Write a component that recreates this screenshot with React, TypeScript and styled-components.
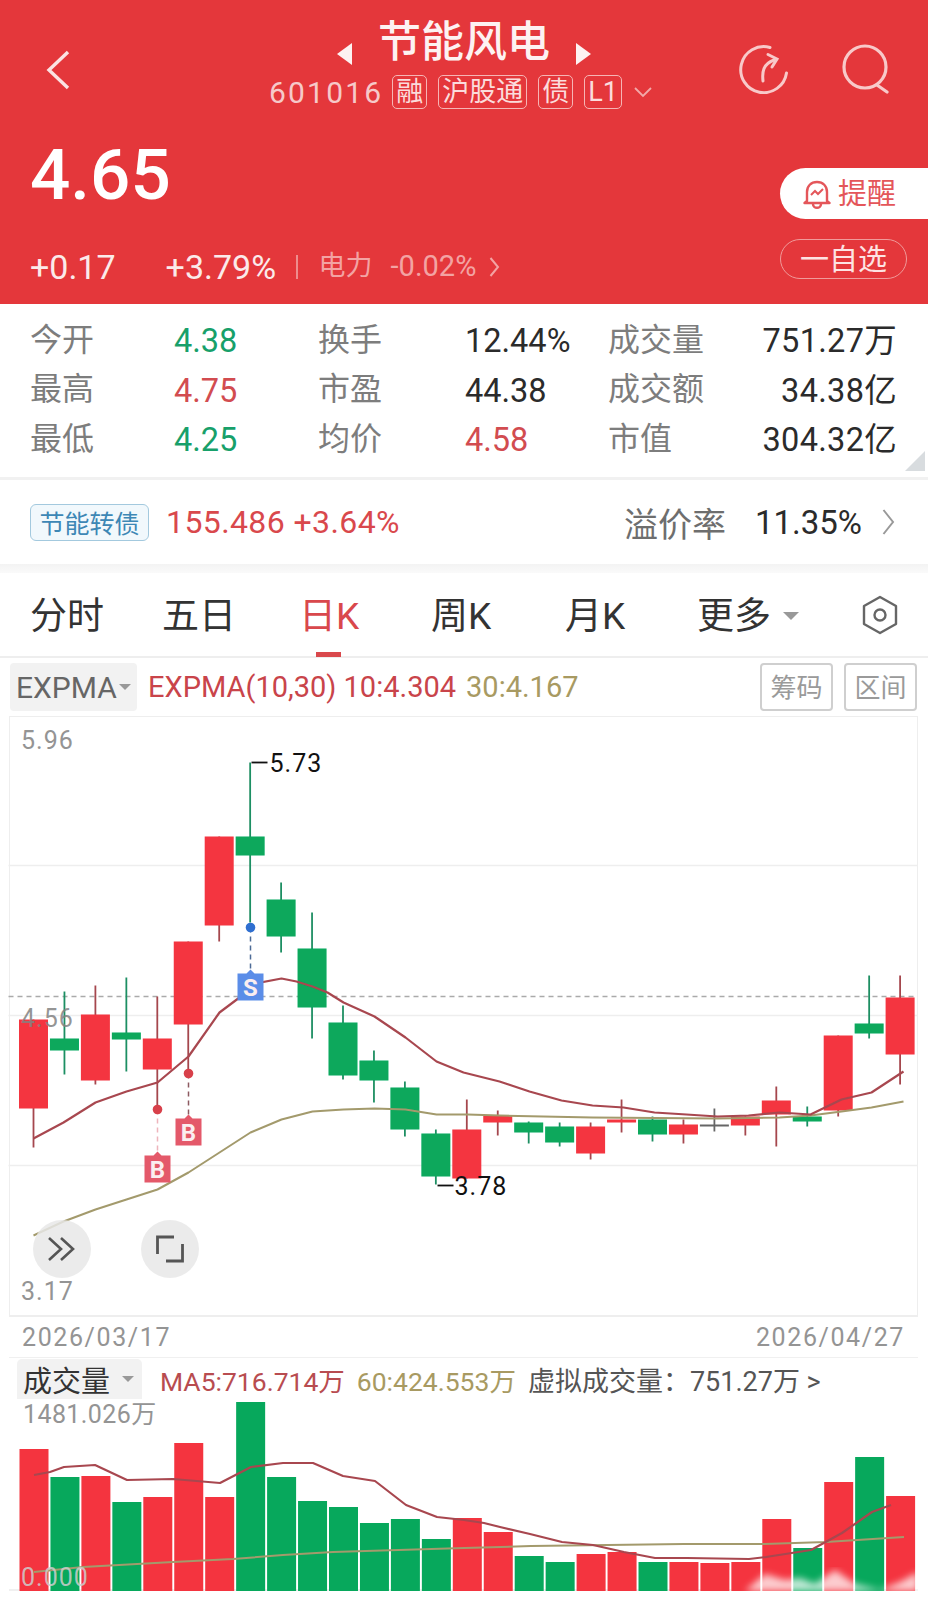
import React from "react";
import styled, { createGlobalStyle } from "styled-components";

const RED = "#f4343f";
const GREEN = "#07a85c";
const FONT = `Roboto, "Noto Sans CJK SC", sans-serif`;

type Candle = [top: number, bottom: number, high: number, low: number, color: "r" | "g" | "d"];

// page coordinates, read off the screenshot
const CANDLES: Candle[] = [
  [1020, 1109, 1020, 1148, "r"],
  [1039, 1051, 992, 1075, "g"],
  [1015, 1081, 986, 1085, "r"],
  [1033, 1040, 978, 1072, "g"],
  [1039, 1070, 997, 1110, "r"],
  [942, 1025, 942, 1073, "r"],
  [837, 926, 837, 942, "r"],
  [837, 856, 763, 923, "g"],
  [900, 937, 883, 953, "g"],
  [949, 1008, 913, 1039, "g"],
  [1023, 1076, 1006, 1080, "g"],
  [1061, 1081, 1051, 1103, "g"],
  [1088, 1130, 1082, 1137, "g"],
  [1134, 1177, 1130, 1185, "g"],
  [1130, 1179, 1100, 1179, "r"],
  [1116, 1123, 1111, 1136, "r"],
  [1123, 1133, 1122, 1144, "g"],
  [1127, 1143, 1123, 1147, "g"],
  [1127, 1154, 1123, 1160, "r"],
  [1120, 1123, 1100, 1133, "r"],
  [1120, 1135, 1117, 1142, "g"],
  [1125, 1135, 1120, 1144, "r"],
  [1125, 1127, 1109, 1132, "d"],
  [1117, 1126, 1117, 1136, "r"],
  [1101, 1115, 1087, 1147, "r"],
  [1117, 1122, 1107, 1127, "g"],
  [1036, 1111, 1036, 1117, "r"],
  [1024, 1034, 976, 1039, "g"],
  [998, 1055, 976, 1085, "r"],
];

const VOLUMES = [
  1449, 1477, 1476, 1502, 1497, 1443, 1497, 1402, 1477, 1501, 1507, 1523, 1519, 1539, 1518, 1532, 1556, 1562, 1554,
  1552, 1562, 1562, 1563, 1562, 1519, 1548, 1482, 1457, 1496,
];

const EXPMA10 =
  "34,1139 64,1123 96,1103 127,1092 158,1083 189,1057 220,1013 240,998 251,985 282,979 297,982 313,987 328,993 344,1003 375,1017 406,1038 437,1062 464,1073 500,1082 530,1092 562,1101 593,1106 624,1108 655,1113 687,1115 718,1117 749,1116 780,1113 811,1115 842,1100 872,1093 904,1072";
const EXPMA30 =
  "34,1236 64,1222 96,1210 127,1200 158,1190 189,1173 220,1153 251,1133 282,1120 313,1112 344,1110 375,1109 406,1110 437,1115 468,1115 500,1116 593,1118 718,1119 780,1118 811,1116 842,1112 872,1108 904,1102";
const MA5 =
  "34,1475 50,1472 64,1467 95,1465 127,1480 173,1479 220,1483 251,1467 283,1463 313,1463 343,1476 375,1481 406,1505 437,1517 464,1520 484,1523 500,1527 530,1534 562,1542 593,1545 624,1552 655,1558 687,1558 749,1559 766,1557 811,1550 842,1533 872,1512 891,1505";
const MA60 =
  "34,1572 83,1567 173,1562 233,1559 283,1555 333,1552 464,1548 531,1546 684,1544 764,1544 826,1542 904,1537";

const candleX = (i: number) => 34 + 30.95 * i;
const fill = (c: Candle[4]) => (c === "r" ? RED : c === "g" ? GREEN : "#666");
const wick = (c: Candle[4]) => (c === "r" ? "#a5474e" : c === "g" ? "#1f8f63" : "#666");

const GlobalStyle = createGlobalStyle`
  html, body {
    margin: 0;
    padding: 0;
    background: #fff;
  }
  body {
    font-family: ${FONT};
  }
  * {
    box-sizing: border-box;
  }
`;

const Page = styled.div`
  width: 928px;
  height: 1600px;
  overflow: hidden;
  background: #fff;
  display: flex;
  flex-direction: column;
`;

const Header = styled.header`
  height: 304px;
  flex: none;
  background: #e4373b;
  color: #fff;
  padding-top: 14px;
`;

const NavRow = styled.div`
  display: grid;
  grid-template-columns: 1fr auto 1fr;
  align-items: start;
`;

const BackSlot = styled.div`
  padding: 36px 0 0 46px;
`;

const ActionSlot = styled.div`
  display: flex;
  justify-content: flex-end;
  gap: 52px;
  padding: 30px 39px 0 0;
`;

const NavCenter = styled.div`
  display: flex;
  flex-direction: column;
  align-items: center;
`;

const TitleRow = styled.div`
  display: flex;
  align-items: center;
  height: 56px;
`;

const TriangleSlot = styled.span`
  display: flex;
  margin-top: 24px;
`;

const Title = styled.h1`
  margin: 0;
  font-size: 43px;
  font-weight: 500;
  line-height: 56px;
  padding: 0 26px;
  color: #fdf2f2;
`;

const Subtitle = styled.div`
  display: flex;
  align-items: center;
  height: 36px;
  margin-top: 4px;
  padding-right: 6px;
  color: #f6c9c9;
`;

const Code = styled.span`
  font-size: 30px;
  letter-spacing: 2.2px;
  margin-right: 9px;
`;

const Tag = styled.span`
  display: inline-flex;
  align-items: center;
  justify-content: center;
  height: 34px;
  padding: 0 3px;
  margin-right: 11px;
  font-size: 27px;
  line-height: 1;
  border: 1.5px solid #f6b5b5;
  border-radius: 5px;
  color: #fbdcdc;
`;

const PriceRow = styled.div`
  display: flex;
  justify-content: space-between;
  margin-top: 58px;
  padding-left: 30px;
`;

const PriceColumn = styled.div`
  display: flex;
  flex-direction: column;
`;

const Price = styled.div`
  font-size: 71px;
  line-height: 52px;
  font-weight: 500;
  color: #fff;
  margin-top: -19px;
`;

const ChangeRow = styled.div`
  display: flex;
  align-items: center;
  margin-top: 49px;
  height: 34px;
`;

const Change = styled.span<{ $gap: number }>`
  font-size: 34px;
  color: #fbeaea;
  margin-right: ${(p) => p.$gap}px;
`;

const Divider = styled.i`
  width: 1.5px;
  height: 24px;
  background: #ee8d8d;
  margin-right: 21px;
`;

const Sector = styled.span<{ $size: number; $gap: number }>`
  font-size: ${(p) => p.$size}px;
  line-height: 30px;
  margin-top: -2px;
  color: #f3a3a3;
  margin-right: ${(p) => p.$gap}px;
`;

const ButtonColumn = styled.div`
  display: flex;
  flex-direction: column;
  align-items: flex-start;
  width: 148px;
  gap: 20px;
`;

const AlarmButton = styled.div`
  display: flex;
  align-items: center;
  gap: 7px;
  width: 148px;
  height: 51px;
  padding-left: 23px;
  background: #fff;
  border-radius: 26px 0 0 26px;
  color: #e4565a;
  font-size: 29px;
`;

const AlarmText = styled.span`
  margin-top: -6px;
`;

const WatchButton = styled.div`
  display: flex;
  align-items: center;
  justify-content: center;
  width: 127px;
  height: 40px;
  padding-bottom: 4px;
  border: 1.5px solid #f09a9a;
  border-radius: 20px;
  color: #fde3e3;
  font-size: 29px;
`;

const Stats = styled.section`
  position: relative;
  flex: none;
  height: 176px;
  padding-top: 12px;
  display: grid;
  grid-template-columns: 144px 144px 147px 143px 150px 1fr;
  grid-auto-rows: 49.5px;
  padding-left: 30px;
  padding-right: 31px;
  align-items: center;
  border-bottom: 3px solid #f1f1f1;
`;

const StatLabel = styled.span`
  font-size: 32px;
  line-height: 44px;
  margin-top: -2px;
  color: #7d7d7d;
  white-space: nowrap;
`;

const StatValue = styled.span<{ $color?: string; $right?: boolean }>`
  font-size: 32.5px;
  line-height: 44px;
  margin-top: 1px;
  color: ${(p) => p.$color || "#2b2b2b"};
  text-align: ${(p) => (p.$right ? "right" : "left")};
  letter-spacing: ${(p) => (p.$right ? 0.3 : 0)}px;
  white-space: nowrap;
`;

const CornerFold = styled.i`
  position: absolute;
  right: 3px;
  bottom: 6px;
  width: 0;
  height: 0;
  border-left: 20px solid transparent;
  border-bottom: 20px solid #d8dcdf;
`;

const BondRow = styled.section`
  flex: none;
  height: 84px;
  display: flex;
  align-items: center;
  padding: 0 33px 0 30px;
`;

const BondTag = styled.span`
  width: 119px;
  height: 37px;
  display: flex;
  align-items: center;
  justify-content: center;
  font-size: 25px;
  color: #3d87b5;
  background: #f1f8fc;
  border: 1.5px solid #a3c9de;
  border-radius: 6px;
  margin-right: 17px;
`;

const BondPrice = styled.span`
  font-size: 32px;
  color: #d9484c;
  letter-spacing: 0.4px;
  flex: 1;
`;

const PremiumLabel = styled.span`
  font-size: 34px;
  color: #6e6e6e;
  margin-right: 29px;
`;

const PremiumValue = styled.span`
  font-size: 33px;
  color: #2b2b2b;
  margin-right: 20px;
`;

const GapBar = styled.div`
  flex: none;
  height: 9px;
  background: linear-gradient(#f3f3f3, #fafafa);
`;

const TabBar = styled.nav`
  flex: none;
  height: 85px;
  display: flex;
  align-items: center;
  padding: 0 30px;
  border-bottom: 2px solid #eee;
`;

const Tab = styled.span<{ $active?: boolean; $width: number }>`
  position: relative;
  display: flex;
  height: 85px;
  padding-bottom: 3px;
  align-items: center;
  width: ${(p) => p.$width}px;
  font-size: 37px;
  color: ${(p) => (p.$active ? "#d9484c" : "#333")};

  ${(p) =>
    p.$active &&
    `
    &::after {
      content: "";
      position: absolute;
      left: 17px;
      bottom: 0;
      width: 25px;
      height: 5px;
      background: #d9484c;
    }
  `}
`;

const Caret = styled.i<{ $size: number; $color: string; $gap?: number }>`
  display: inline-block;
  width: 0;
  height: 0;
  margin-left: ${(p) => p.$gap || 0}px;
  margin-top: ${(p) => (p.$gap ? 5 : 0)}px;
  border-left: ${(p) => p.$size}px solid transparent;
  border-right: ${(p) => p.$size}px solid transparent;
  border-top: ${(p) => p.$size}px solid ${(p) => p.$color};
`;

const IndicatorRow = styled.div`
  flex: none;
  height: 58px;
  display: flex;
  align-items: center;
  padding: 0 11px 0 10px;
`;

const IndicatorChip = styled.div`
  width: 127px;
  height: 48px;
  display: flex;
  align-items: center;
  gap: 2px;
  padding-left: 6px;
  background: #f2f2f2;
  border-radius: 4px;
  font-size: 30px;
  color: #666;
  margin-right: 11px;
`;

const SeriesText = styled.span<{ $color: string; $size: number; $gap?: number }>`
  font-size: ${(p) => p.$size}px;
  color: ${(p) => p.$color};
  margin-right: ${(p) => p.$gap || 0}px;
  white-space: nowrap;
`;

const Spacer = styled.div`
  flex: 1;
`;

const OutlineButton = styled.span`
  width: 73px;
  height: 48px;
  display: flex;
  align-items: center;
  justify-content: center;
  margin-left: 11px;
  padding-bottom: 3px;
  font-size: 26px;
  color: #9a9a9a;
  border: 2px solid #cfcfcf;
  border-radius: 4px;
`;

const ChartPanel = styled.section`
  position: relative;
  flex: none;
  height: 601px;
  margin: 0 10px 0 9px;
  border: 1.5px solid #eee;
  border-bottom-width: 2px;

  svg {
    display: block;
    overflow: visible;
  }
`;

const AxisLabel = styled.span<{ $top: number; $left?: number; $color?: string; $spacing?: number }>`
  position: absolute;
  top: ${(p) => p.$top}px;
  left: ${(p) => p.$left ?? 11}px;
  font-size: 25px;
  line-height: 30px;
  letter-spacing: ${(p) => p.$spacing ?? 1}px;
  color: ${(p) => p.$color || "#949494"};
  white-space: nowrap;
`;

const RoundButton = styled.div<{ $left: number }>`
  position: absolute;
  left: ${(p) => p.$left}px;
  top: 503px;
  width: 58px;
  height: 58px;
  display: flex;
  align-items: center;
  justify-content: center;
  border-radius: 50%;
  background: rgba(232, 232, 232, 0.85);
`;

const DateRow = styled.div`
  flex: none;
  height: 41px;
  margin: 0 10px 0 9px;
  padding: 0 13px 0 13px;
  display: flex;
  align-items: center;
  justify-content: space-between;
  font-size: 25px;
  letter-spacing: 1.6px;
  color: #949494;
  border-bottom: 1.5px solid #f0f0f0;
`;

const VolumeHeader = styled.div`
  flex: none;
  height: 42px;
  display: flex;
  align-items: center;
  padding-left: 17px;
`;

const VolumeChip = styled.div`
  width: 125px;
  height: 40px;
  display: flex;
  align-items: center;
  gap: 12px;
  padding-left: 6px;
  background: #f2f2f2;
  border-radius: 5px 5px 0 0;
  font-size: 29px;
  color: #333;
  margin-right: 18px;
`;

const VolumePanel = styled.section`
  position: relative;
  flex: none;
  height: 191px;
  margin: 0 10px 0 9px;
  border-bottom: 2px solid #f0f0f0;

  svg {
    display: block;
    overflow: visible;
  }
`;

const BackIcon = () => (
  <svg width="24" height="40" viewBox="0 0 24 40" fill="none" stroke="#fbe3e3" strokeWidth="3.4">
    <path d="M22 2 L3 20 L22 38" />
  </svg>
);

const RefreshIcon = () => (
  <svg width="50" height="50" viewBox="0 0 50 50" fill="none" stroke="#f8c9c9" strokeWidth="3">
    <path d="M31 3.5 A23 23 0 1 0 47.5 29" strokeLinecap="round" />
    <path d="M24 37 C23 28 24 20 35 16" strokeLinecap="round" />
    <path d="M29 10.5 L38 15 L33 23" strokeLinecap="round" />
  </svg>
);

const SearchIcon = () => (
  <svg width="48" height="50" viewBox="0 0 48 50" fill="none" stroke="#f8c9c9" strokeWidth="3.2">
    <circle cx="24" cy="23" r="21" />
    <path d="M36 41 L46 48" strokeLinecap="round" />
  </svg>
);

const Triangle = ({ dir }: { dir: "l" | "r" }) => (
  <TriangleSlot>
    <svg width="15" height="22" viewBox="0 0 15 22" fill="#fdf2f2">
      <path d={dir === "l" ? "M15 0 V22 L0 11 Z" : "M0 0 V22 L15 11 Z"} />
    </svg>
  </TriangleSlot>
);

const SmallChevronDown = () => (
  <svg width="20" height="12" viewBox="0 0 20 12" fill="none" stroke="#f2a9a9" strokeWidth="1.8">
    <path d="M2 2 L10 10 L18 2" />
  </svg>
);

const ChevronRight = ({ color, w, h }: { color: string; w: number; h: number }) => (
  <svg width={w} height={h} viewBox={`0 0 ${w} ${h}`} fill="none" stroke={color} strokeWidth="2">
    <path d={`M1.5 1 L${w - 2} ${h / 2} L1.5 ${h - 1}`} />
  </svg>
);

const BellIcon = () => (
  <svg width="28" height="30" viewBox="0 0 28 30" fill="none" stroke="#e4565a" strokeWidth="2.4">
    <path d="M4 22 V13 C4 7 8 3 14 3 C20 3 24 7 24 13 V22 L26.5 24 H1.5 Z" strokeLinejoin="round" />
    <path d="M10 25 C10 30 18 30 18 25" />
    <path d="M8 16 L12 12 L15 15 L20 10" strokeWidth="2" />
  </svg>
);

const HexIcon = () => (
  <svg width="36" height="40" viewBox="0 0 36 40" fill="none" stroke="#666" strokeWidth="2.4">
    <path d="M18 2 L34 11 V29 L18 38 L2 29 V11 Z" strokeLinejoin="round" />
    <circle cx="18" cy="20" r="5.5" />
  </svg>
);

const DoubleChevron = () => (
  <svg width="30" height="26" viewBox="0 0 30 26" fill="none" stroke="#555" strokeWidth="2.6">
    <path d="M2 2 L14 13 L2 24" />
    <path d="M14 2 L26 13 L14 24" />
  </svg>
);

const FullscreenIcon = () => (
  <svg width="28" height="28" viewBox="0 0 28 28" fill="none" stroke="#555" strokeWidth="2.8">
    <path d="M1.5 19 V2 H18" />
    <path d="M26.5 9 V26 H10" />
  </svg>
);

const Marker = ({ x, y, color, label }: { x: number; y: number; color: string; label: string }) => (
  <g>
    <path d={`M${x - 13} ${y} H${x - 4} L${x} ${y - 4} L${x + 4} ${y} H${x + 13} V${y + 27} H${x - 13} Z`} fill={color} />
    <text x={x} y={y + 22} textAnchor="middle" fontFamily="Roboto, sans-serif" fontSize="24" fontWeight="700" fill="#fbeef0">
      {label}
    </text>
  </g>
);

const PriceChart = () => (
  <svg width="906" height="598" viewBox="10.5 717.5 906 598">
    <defs>
      <filter id="soft">
        <feGaussianBlur stdDeviation="0.35" />
      </filter>
    </defs>
    {[866, 1016, 1166].map((y) => (
      <line key={y} x1="9" x2="918" y1={y} y2={y} stroke="#eeeeee" strokeWidth="1.5" />
    ))}
    <line x1="9" x2="918" y1="997" y2="997" stroke="#aaaaaa" strokeWidth="1.5" strokeDasharray="5 4" />
    <g filter="url(#soft)">
      {CANDLES.map(([top, bottom, high, low, c], i) => {
        const x = candleX(i);
        return (
          <g key={i}>
            <line x1={x} x2={x} y1={high} y2={low} stroke={wick(c)} strokeWidth="1.8" />
            <rect x={x - 14.5} y={top} width="29" height={bottom - top} fill={fill(c)} />
          </g>
        );
      })}
      <polyline points={EXPMA30} fill="none" stroke="#a39a6c" strokeWidth="2" strokeLinejoin="round" />
      <polyline points={EXPMA10} fill="none" stroke="#a8474f" strokeWidth="2.2" strokeLinejoin="round" />
    </g>

    <line x1="251" x2="251" y1="928" y2="972" stroke="#4d6b96" strokeWidth="1.5" strokeDasharray="5 4" />
    <circle cx="251" cy="928" r="4.8" fill="#2f6fd0" />
    <Marker x={251} y={974} color="#5b8de8" label="S" />
    <line x1="158" x2="158" y1="1110" y2="1154" stroke="#eeb4bc" strokeWidth="1.5" strokeDasharray="5 4" />
    <circle cx="158" cy="1110" r="4.8" fill="#d8404a" />
    <Marker x={158} y={1156} color="#e4596a" label="B" />
    <line x1="189" x2="189" y1="1074" y2="1117" stroke="#8d5a60" strokeWidth="1.5" strokeDasharray="5 4" />
    <circle cx="189" cy="1074" r="4.8" fill="#d8404a" />
    <Marker x={189} y={1119} color="#e4596a" label="B" />

    <line x1="252" x2="268" y1="763" y2="763" stroke="#111" strokeWidth="1.8" />
    <text x="270" y="772" fontFamily="Roboto, sans-serif" fontSize="25" letterSpacing="1" fill="#111">
      5.73
    </text>
    <line x1="438" x2="454" y1="1186" y2="1186" stroke="#111" strokeWidth="1.8" />
    <text x="455" y="1195" fontFamily="Roboto, sans-serif" fontSize="25" letterSpacing="1" fill="#111">
      3.78
    </text>
  </svg>
);

const VolumeChart = () => (
  <svg width="909" height="191" viewBox="9 1400 909 191">
    <defs>
      <filter id="smudge">
        <feGaussianBlur stdDeviation="3.5" />
      </filter>
    </defs>
    {VOLUMES.map((top, i) => (
      <rect key={i} x={candleX(i) - 14.5} y={top} width="29" height={1591 - top} fill={fill(CANDLES[i][4] === "d" ? "r" : CANDLES[i][4])} />
    ))}
    <polyline points={MA60} fill="none" stroke="#a39a6c" strokeWidth="2" strokeLinejoin="round" />
    <polyline points={MA5} fill="none" stroke="#a8474f" strokeWidth="2.2" strokeLinejoin="round" />
    <path
      d="M745 1591 L765 1574 L785 1580 L800 1578 L815 1584 L835 1570 L855 1584 L880 1590 L900 1582 L918 1572 V1591 Z"
      fill="#fff"
      opacity="0.75"
      filter="url(#smudge)"
    />
  </svg>
);

export default function App() {
  return (
    <Page>
      <GlobalStyle />
      <Header>
        <NavRow>
          <BackSlot>
            <BackIcon />
          </BackSlot>
          <NavCenter>
            <TitleRow>
              <Triangle dir="l" />
              <Title>节能风电</Title>
              <Triangle dir="r" />
            </TitleRow>
            <Subtitle>
              <Code>601016</Code>
              <Tag>融</Tag>
              <Tag>沪股通</Tag>
              <Tag>债</Tag>
              <Tag>L1</Tag>
              <SmallChevronDown />
            </Subtitle>
          </NavCenter>
          <ActionSlot>
            <RefreshIcon />
            <SearchIcon />
          </ActionSlot>
        </NavRow>
        <PriceRow>
          <PriceColumn>
            <Price>4.65</Price>
            <ChangeRow>
              <Change $gap={50}>+0.17</Change>
              <Change $gap={20}>+3.79%</Change>
              <Divider />
              <Sector $size={27} $gap={18}>
                电力
              </Sector>
              <Sector $size={29} $gap={13}>
                -0.02%
              </Sector>
              <ChevronRight color="#f3a3a3" w={11} h={20} />
            </ChangeRow>
          </PriceColumn>
          <ButtonColumn>
            <AlarmButton>
              <BellIcon />
              <AlarmText>提醒</AlarmText>
            </AlarmButton>
            <WatchButton>一自选</WatchButton>
          </ButtonColumn>
        </PriceRow>
      </Header>

      <Stats>
        <StatLabel>今开</StatLabel>
        <StatValue $color="#17a06a">4.38</StatValue>
        <StatLabel>换手</StatLabel>
        <StatValue>12.44%</StatValue>
        <StatLabel>成交量</StatLabel>
        <StatValue $right>751.27万</StatValue>
        <StatLabel>最高</StatLabel>
        <StatValue $color="#d24c50">4.75</StatValue>
        <StatLabel>市盈</StatLabel>
        <StatValue>44.38</StatValue>
        <StatLabel>成交额</StatLabel>
        <StatValue $right>34.38亿</StatValue>
        <StatLabel>最低</StatLabel>
        <StatValue $color="#17a06a">4.25</StatValue>
        <StatLabel>均价</StatLabel>
        <StatValue $color="#d24c50">4.58</StatValue>
        <StatLabel>市值</StatLabel>
        <StatValue $right>304.32亿</StatValue>
        <CornerFold />
      </Stats>

      <BondRow>
        <BondTag>节能转债</BondTag>
        <BondPrice>155.486 +3.64%</BondPrice>
        <PremiumLabel>溢价率</PremiumLabel>
        <PremiumValue>11.35%</PremiumValue>
        <ChevronRight color="#999" w={13} h={26} />
      </BondRow>

      <GapBar />

      <TabBar>
        <Tab $width={132}>分时</Tab>
        <Tab $width={137}>五日</Tab>
        <Tab $width={132} $active>
          日K
        </Tab>
        <Tab $width={134}>周K</Tab>
        <Tab $width={132}>月K</Tab>
        <Tab $width={165}>
          更多
          <Caret $size={8} $color="#999" $gap={12} />
        </Tab>
        <HexIcon />
      </TabBar>

      <IndicatorRow>
        <IndicatorChip>
          EXPMA
          <Caret $size={6} $color="#999" />
        </IndicatorChip>
        <SeriesText $color="#c9444a" $size={29} $gap={10}>
          EXPMA(10,30) 10:4.304
        </SeriesText>
        <SeriesText $color="#a89a62" $size={29}>
          30:4.167
        </SeriesText>
        <Spacer />
        <OutlineButton>筹码</OutlineButton>
        <OutlineButton>区间</OutlineButton>
      </IndicatorRow>

      <ChartPanel>
        <PriceChart />
        <AxisLabel $top={9}>5.96</AxisLabel>
        <AxisLabel $top={287} $color="rgba(130,130,130,.85)">
          4.56
        </AxisLabel>
        <AxisLabel $top={560}>3.17</AxisLabel>
        <RoundButton $left={23}>
          <DoubleChevron />
        </RoundButton>
        <RoundButton $left={131}>
          <FullscreenIcon />
        </RoundButton>
      </ChartPanel>

      <DateRow>
        <span>2026/03/17</span>
        <span>2026/04/27</span>
      </DateRow>

      <VolumeHeader>
        <VolumeChip>
          成交量
          <Caret $size={6} $color="#999" />
        </VolumeChip>
        <SeriesText $color="#b84c50" $size={26.5} $gap={12}>
          MA5:716.714万
        </SeriesText>
        <SeriesText $color="#a89a62" $size={26.5} $gap={12}>
          60:424.553万
        </SeriesText>
        <SeriesText $color="#555" $size={27}>
          虚拟成交量：751.27万 &gt;
        </SeriesText>
      </VolumeHeader>

      <VolumePanel>
        <VolumeChart />
        <AxisLabel $top={0} $left={14} $spacing={0.4}>
          1481.026万
        </AxisLabel>
        <AxisLabel $top={163} $left={12} $color="rgba(205,205,205,.85)">
          0.000
        </AxisLabel>
      </VolumePanel>
    </Page>
  );
}
